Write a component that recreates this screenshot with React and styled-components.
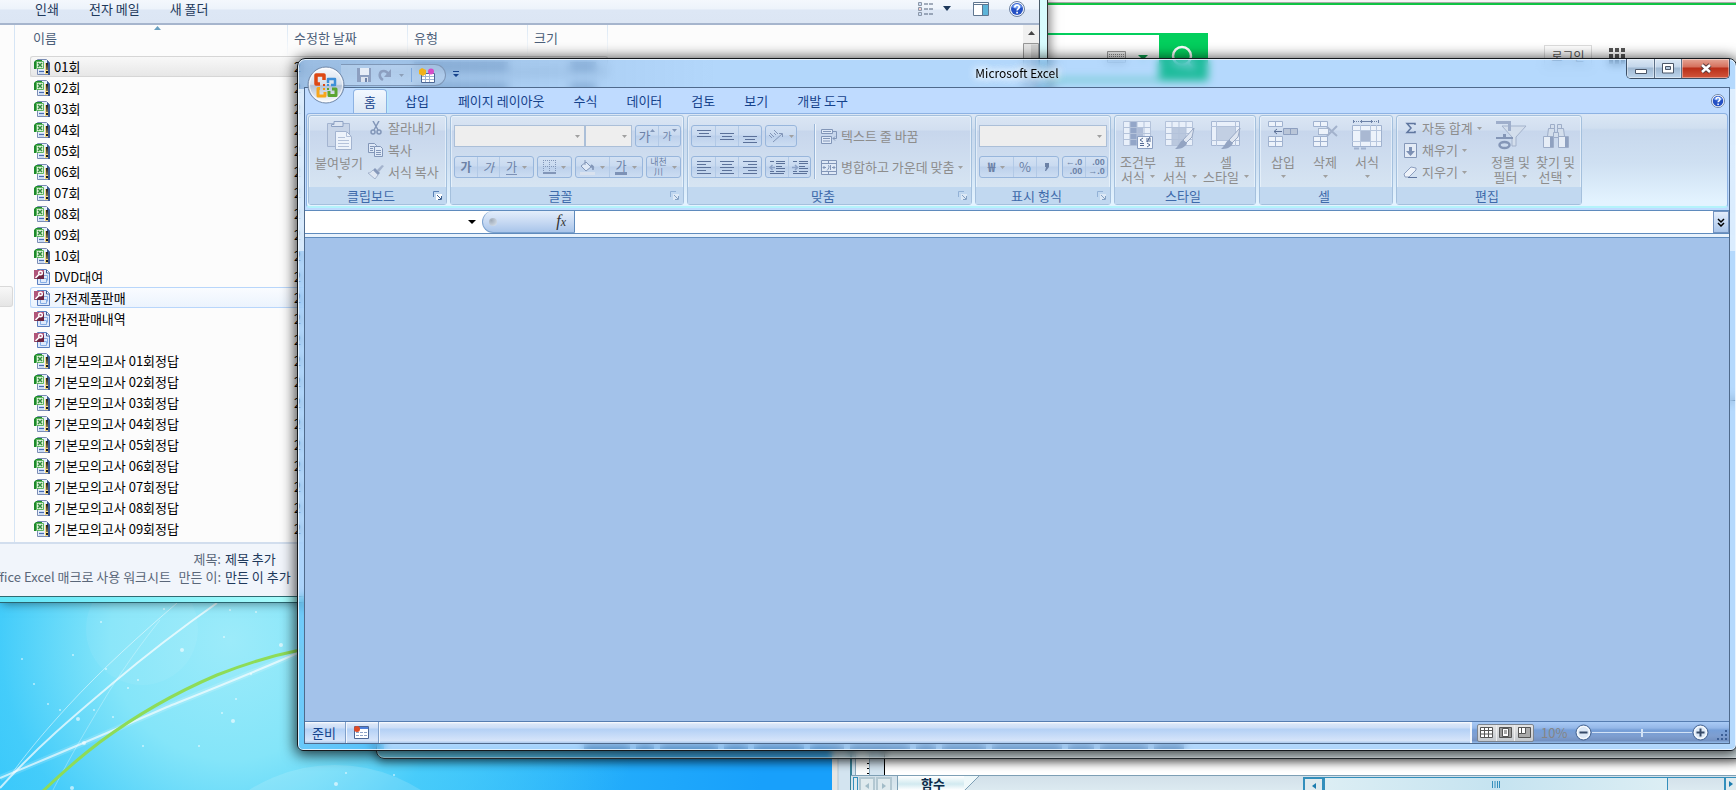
import React from 'react';
import styled, { createGlobalStyle, css } from 'styled-components';

const GlobalStyle = createGlobalStyle`
  * {
    box-sizing: border-box;
  }
  body {
    margin: 0;
    font-family: 'Noto Sans CJK KR', 'Open Sans', sans-serif;
    font-size: 13px;
    line-height: 18px;
    overflow: hidden;
  }
  button, input, select {
    font: inherit;
    color: inherit;
    margin: 0;
    padding: 0;
    border: 0;
    border-radius: 0;
    background: none;
    outline: none;
  }
  svg {
    display: block;
    flex: none;
  }
`;

/* ---------- desktop ---------- */

const Desktop = styled.div`
  position: relative;
  height: 100vh;
  overflow: hidden;
  background: radial-gradient(
      circle at 230px calc(100% - 150px),
      #9cebfa 0,
      #84e5f9 120px,
      rgba(78, 208, 250, 0.8) 230px,
      rgba(60, 200, 252, 0) 420px
    ),
    linear-gradient(100deg, #10bcfa 0, #35c2fb 25%, #18a0fb 48%);
`;
const Wallpaper = styled.svg`
  position: absolute;
  left: 0;
  bottom: 0;
`;

const sparks = [
  [164, 6, 1], [230, 7, 1], [256, 9, 1], [101, 19, 1], [182, 47, 2], [281, 42, 2],
  [224, 34, 1], [73, 52, 1], [22, 56, 1], [138, 77, 1], [48, 101, 1], [106, 66, 1],
  [84, 140, 2], [94, 107, 1], [113, 114, 1], [128, 85, 1], [251, 71, 1], [222, 110, 1],
  [233, 118, 2], [236, 96, 1], [78, 116, 2], [60, 107, 1], [34, 81, 1], [72, 185, 2],
  [143, 143, 1], [336, 181, 2], [394, 172, 1], [346, 170, 1], [199, 143, 1],
];

function Background() {
  return (
    <Wallpaper width="832" height="187" viewBox="0 0 832 187" fill="none">
      <circle cx="335" cy="322" r="160" fill="#fff" opacity="0.14" />
      <circle cx="142" cy="26" r="56" fill="#fff" opacity="0.06" />
      <path d="M177 0C140 32 103 65 67 104C48 125 32 143 13 169" stroke="#fff" opacity="0.5" />
      <path d="M160 17C140 42 124 65 110 87C92 117 72 150 53 187" stroke="#fff" opacity="0.3" />
      <path d="M217 0C180 26 145 53 113 80C75 112 38 143 0 185" stroke="#fff" strokeWidth="2" opacity="0.7" />
      <path d="M0 175C60 150 110 129 167 104C212 86 255 69 300 49" stroke="#fff" strokeWidth="6" opacity="0.15" />
      <path d="M0 175C60 150 110 129 167 104C212 86 255 69 300 49" stroke="#fff" strokeWidth="2" opacity="0.65" />
      <path d="M43 188C62 170 80 154 100 139C135 113 175 90 217 72C245 61 270 53 300 47" stroke="#8edc57" strokeWidth="3" />
      {sparks.map(([x, y, r]) => (
        <circle key={`${x}-${y}`} cx={x} cy={y} r={r} fill="#fff" opacity="0.6" />
      ))}
    </Wallpaper>
  );
}

/* ---------- web browser ---------- */

const Browser = styled.section`
  position: absolute;
  top: 0;
  left: 1048px;
  right: 0;
  height: 400px;
  background: #fff;
  border-top: 2px solid #f4f4f4;
`;
const BrowserLine = styled.div`
  height: 3px;
  background: #10c343;
  border-top: 1px solid #a8a8a8;
`;
const BrowserRow = styled.div`
  display: flex;
  align-items: flex-start;
  justify-content: space-between;
  padding: 28px 111px 0 0;
`;
const SearchBox = styled.div`
  display: flex;
`;
const SearchField = styled.div`
  display: flex;
  align-items: center;
  width: 111px;
  height: 48px;
  border: 2px solid #03cf5d;
  border-left: 0;
  border-right: 0;
  gap: 12px;
`;
const SearchInput = styled.input`
  flex: 1;
  min-width: 0;
`;
const SearchButton = styled.button`
  display: flex;
  flex: none;
  align-items: center;
  justify-content: center;
  width: 49px;
  height: 48px;
  background: #03cf5d;
`;
const BrowserLinks = styled.div`
  display: flex;
  gap: 17px;
  margin-top: 12px;
`;
const LoginLink = styled.a`
  width: 48px;
  height: 24px;
  border: 1px solid #ddd;
  color: #555;
  text-align: center;
  text-decoration: none;
  font-size: 12px;
  line-height: 20px;
`;

function BrowserWindow() {
  return (
    <Browser>
      <BrowserLine />
      <BrowserRow>
        <SearchBox>
          <SearchField>
            <SearchInput aria-label="검색" />
            <svg width="19" height="12" viewBox="0 0 19 12">
              <path d="M.5.500h18v11h-18z" fill="#eee" stroke="#999" />
              <path d="M2 3.500h15M2 5.500h15M2 7.500h15" stroke="#888" strokeDasharray="1 1" />
            </svg>
            <svg width="21" height="5" viewBox="0 0 21 5">
              <path d="M0 0h10l-5 5z" fill="#0a9a4a" />
            </svg>
          </SearchField>
          <SearchButton aria-label="검색 실행">
            <svg width="28" height="28" viewBox="0 0 28 28" fill="none" stroke="#fff" strokeWidth="2.500">
              <circle cx="12" cy="13" r="9" />
              <path d="M18 20l6 6" />
            </svg>
          </SearchButton>
        </SearchBox>
        <BrowserLinks>
          <LoginLink href="#">로그인</LoginLink>
          <svg width="16" height="20" viewBox="0 0 16 20" fill="#555">
            {[3, 9, 15].map((y) => [0, 6, 12].map((x) => <rect key={`${x}${y}`} x={x} y={y} width="4" height="4" />))}
          </svg>
        </BrowserLinks>
      </BrowserRow>
    </Browser>
  );
}

/* ---------- file explorer ---------- */

const Explorer = styled.section`
  position: absolute;
  top: 0;
  left: 0;
  bottom: 187px;
  width: 1048px;
  padding: 0 7px 5px 0;
  background: linear-gradient(90deg, #62e6f8, #a6fbfb 280px, #d8fcfd);
  border-right: 1px solid #333;
  border-bottom: 1px solid #2a6570;
  box-shadow: 2px 0 10px rgba(0, 0, 0, 0.5);
`;
const ExplorerBody = styled.div`
  display: flex;
  flex-direction: column;
  height: 100%;
  background: #fcfcfc;
  border-right: 1px solid #4a5a68;
  border-bottom: 1px solid #2f6c74;
`;
const CommandBar = styled.div`
  display: flex;
  align-items: center;
  flex: none;
  height: 25px;
  padding: 0 14px 6px 35px;
  gap: 30px;
  color: #1e395b;
  background: linear-gradient(#f4f8fd 0, #edf3fb 9px, #dde7f5 10px, #dce6f4 100%);
  border-bottom: 2px solid #a6b5cd;
`;
const CommandIcons = styled.div`
  display: flex;
  align-items: center;
  margin-left: auto;
  gap: 10px;
`;
const IconButton = styled.button`
  display: flex;
  margin-right: ${(p) => p.$space || 0}px;
`;
const ExplorerMain = styled.div`
  display: flex;
  flex: 1;
  min-height: 0;
`;
const NavPane = styled.div`
  flex: none;
  width: 15px;
  padding-top: 261px;
  border-right: 1px solid #d6e5f5;
`;
const NavItem = styled.div`
  width: 13px;
  height: 21px;
  border: 1px solid #d9d9d9;
  border-left: 0;
  border-radius: 0 3px 3px 0;
  background: linear-gradient(#f8f8f8, #e5e5e5);
`;
const FileList = styled.div`
  flex: 1;
  overflow: hidden;
  padding-left: 15px;
`;
const FileTable = styled.table`
  width: 577px;
  table-layout: fixed;
  border-collapse: separate;
  border-spacing: 0;
  color: #000;
`;
const ColumnHead = styled.th`
  width: ${(p) => p.$width}px;
  height: 31px;
  padding: 0 0 9px ${(p) => (p.$first ? 3 : 6)}px;
  text-align: left;
  font-weight: normal;
  vertical-align: bottom;
  color: #4c607a;
  border-right: 1px solid;
  border-image: linear-gradient(#d8e6f4, #fcfcfc) 1;
`;
const SortMark = styled.svg`
  margin: 0 0 -1px 121px;
`;
const FileRow = styled.tr`
  height: 21px;
  ${(p) =>
    p.$state === 'selected' &&
    css`
      background: linear-gradient(#f9f9f9, #e6e6e6);
      box-shadow: inset 0 0 0 1px #d6d6d6;
      border-radius: 3px;
    `}
  ${(p) =>
    p.$state === 'hover' &&
    css`
      background: linear-gradient(#fafcff, #ebf3fd);
      box-shadow: inset 0 0 0 1px #b8d6fb;
      border-radius: 3px;
    `}
`;
const FileCell = styled.td`
  height: 21px;
  padding: 0 0 0 6px;
  white-space: nowrap;
  line-height: 19px;
`;
const FileName = styled.div`
  display: flex;
  align-items: center;
  gap: 4px;
  margin-left: -2px;
`;
const Smudge = styled.div`
  width: ${(p) => p.$width}px;
  height: 9px;
  margin-left: ${(p) => p.$left || 0}px;
  background: #b4b9c2;
`;
const DetailsPane = styled.div`
  display: grid;
  grid-template-columns: 171px 46px auto;
  flex: none;
  align-content: start;
  column-gap: 4px;
  height: 54px;
  padding-top: 6px;
  background: #f1f5fb;
  border-top: 2px solid #d2deee;
  color: #5a6779;
  white-space: nowrap;
  strong {
    font-weight: normal;
    color: #1e395b;
  }
`;
const DetailCell = styled.span`
  display: flex;
  justify-content: flex-end;
  overflow: hidden;
`;

function ExcelFileIcon() {
  return (
    <svg width="16" height="16" viewBox="0 0 16 16">
      <path d="M3.500.500h9l3 3v12h-12z" fill="#e9f0fb" stroke="#7a8cb4" />
      <path d="M13 1l3 3v12h-2V5h-1z" fill="#3c5a94" />
      <path d="M5 11h5v4H5z" fill="#c9daf2" />
      <path d="M5 12.500h5" stroke="#4a6cb0" />
      <path d="M0 3l2-2h6v2H2v7H0z" fill="#1d8a2b" />
      <path d="M2.500 2.500h7v7h-7z" fill="#e2f4dd" stroke="#5db45f" />
      <path d="M4 4l4 4M8 4l-4 4" stroke="#2f8a3b" strokeWidth="1.500" />
      <path d="M11 4h3v11h-3z" fill="#f6d77d" />
      <path d="M12 4h2l-.5 7h-1zM12 12h2v2h-2z" fill="#1c1c1c" />
    </svg>
  );
}

function AccessFileIcon() {
  return (
    <svg width="16" height="16" viewBox="0 0 16 16">
      <path d="M3.500.500h9l3 3v12h-12z" fill="#dfeafb" stroke="#5b7fc0" />
      <path d="M12.500 1v3h3" stroke="#3c5a94" fill="#fff" />
      <path d="M6.500 9.500h6v4h-6zM8.500 6.500h5v5" fill="none" stroke="#86aee6" />
      <path d="M0 1h10v5L0 10z" fill="#b0567a" />
      <path d="M0 10l10-7v7z" fill="#6c2440" />
      <circle cx="6.500" cy="4" r="1.800" fill="none" stroke="#fff" strokeWidth="1.400" />
      <path d="M5 5.500L1.500 9" stroke="#fff" strokeWidth="1.600" />
    </svg>
  );
}

function HelpIcon({ size = 16 }) {
  return (
    <svg width={size} height={size} viewBox="0 0 16 16">
      <circle cx="8" cy="8" r="7.500" fill="#f4f8ff" stroke="#6a7f9f" />
      <circle cx="8" cy="8" r="6" fill="#2450c4" />
      <path d="M3 6a5.500 5.500 0 0 1 10 0c-3 2-7 2-10 0z" fill="#6f9bf0" />
      <path d="M5.800 6.400c0-3 4.500-3 4.500-.3 0 1.700-2.200 1.700-2.200 3.400M8.100 10.800v1.700" fill="none" stroke="#fff" strokeWidth="1.700" />
    </svg>
  );
}

const books = ['01', '02', '03', '04', '05', '06', '07', '08', '09', '10'];
const files = [
  ...books.map((n) => ({ name: `${n}회` })),
  { name: 'DVD대여', access: true },
  { name: '가전제품판매', access: true },
  { name: '가전판매내역', access: true },
  { name: '급여', access: true },
  ...books.map((n) => ({ name: `기본모의고사 ${n}회정답` })),
];
const rowState = { 0: 'selected', 11: 'hover' };

function ExplorerWindow() {
  return (
    <Explorer>
      <ExplorerBody>
        <CommandBar>
          <button>인쇄</button>
          <button>전자 메일</button>
          <button>새 폴더</button>
          <CommandIcons>
            <IconButton aria-label="보기">
              <svg width="16" height="14" viewBox="0 0 16 14" fill="none">
                <path d="M1.500.500h3v3h-3zM1.500 5.500h3v3h-3zM1.500 10.500h3v3h-3z" fill="#fff" stroke="#8b97a8" />
                <path d="M7 2h4M12 2h4M7 7h4M12 7h4M7 12h4M12 12h4" stroke="#52627a" />
                <path d="M2.500 2h1M2.500 12h1" stroke="#2d6fd0" />
                <path d="M2.500 7h1" stroke="#d03a2d" />
              </svg>
            </IconButton>
            <IconButton aria-label="보기 선택" $space={12}>
              <svg width="8" height="5" viewBox="0 0 8 5">
                <path d="M0 0h8L4 5z" fill="#1e395b" />
              </svg>
            </IconButton>
            <IconButton aria-label="미리 보기 창" $space={10}>
              <svg width="16" height="14" viewBox="0 0 16 14">
                <path d="M.5.500h15v13H.500z" fill="#fff" stroke="#5f7690" />
                <path d="M10 3h5v10h-5z" fill="#5db4d8" />
                <path d="M0 2.500h16M9.500 2v12" stroke="#5f7690" />
              </svg>
            </IconButton>
            <IconButton aria-label="도움말">
              <HelpIcon />
            </IconButton>
          </CommandIcons>
        </CommandBar>
        <ExplorerMain>
          <NavPane>
            <NavItem />
          </NavPane>
          <FileList>
            <FileTable>
              <thead>
                <tr>
                  <ColumnHead $width={258} $first>
                    <SortMark width="7" height="4" viewBox="0 0 7 4">
                      <path d="M0 4l3.500-4L7 4z" fill="#6aa0c0" />
                    </SortMark>
                    이름
                  </ColumnHead>
                  <ColumnHead $width={120}>수정한 날짜</ColumnHead>
                  <ColumnHead $width={120}>유형</ColumnHead>
                  <ColumnHead $width={80}>크기</ColumnHead>
                </tr>
              </thead>
              <tbody>
                {files.map((file, i) => (
                  <FileRow key={file.name} $state={rowState[i]}>
                    <FileCell>
                      <FileName>
                        {file.access ? <AccessFileIcon /> : <ExcelFileIcon />}
                        {file.name}
                      </FileName>
                    </FileCell>
                    <FileCell>2</FileCell>
                    <FileCell>
                      <Smudge $width={94} />
                    </FileCell>
                    <FileCell>
                      <Smudge $width={26} $left={36} />
                    </FileCell>
                  </FileRow>
                ))}
              </tbody>
            </FileTable>
          </FileList>
          <svg width="16" height="400" viewBox="0 0 16 400">
            <path d="M0 0h16v400H0z" fill="#f0f0f0" />
            <path d="M5 10l3.500-4 3.500 4z" fill="#444" />
            <path d="M.5 18.500h15V400H.5z" fill="#e6e6e6" stroke="#979797" />
            <path d="M8 19.500h7V400H8z" fill="#cfcfcf" />
          </svg>
        </ExplorerMain>
        <DetailsPane>
          <span />
          <DetailCell>제목:</DetailCell>
          <strong>제목 추가</strong>
          <DetailCell>Microsoft Office Excel 매크로 사용 워크시트</DetailCell>
          <DetailCell>만든 이:</DetailCell>
          <strong>만든 이 추가</strong>
        </DetailsPane>
      </ExplorerBody>
    </Explorer>
  );
}

/* ---------- spreadsheet behind, lower right ---------- */

const Sheet = styled.section`
  position: absolute;
  left: 832px;
  right: 0;
  bottom: 0;
  height: 100px;
  display: flex;
  flex-direction: column;
  padding-left: 19px;
  background: linear-gradient(90deg, #e6e6e4 0 5px, #b4c6d2 6px, #d3e4f0 7px 18px, #3a8298 18px 20px);
`;
const SheetArea = styled.div`
  display: flex;
  flex: 1;
  background: #fff;
`;
const Ruler = styled.div`
  display: flex;
  align-items: flex-end;
  justify-content: center;
  width: 34px;
  border-left: 1px solid #3a8298;
  border-right: 1px solid #000;
  background: linear-gradient(90deg, #d3e4f0 0 3px, #8aa9bd 3px 4px, #fbfcfc 4px 17px, #8aa9bd 17px 18px, #d3e4f0 18px);
`;
const SheetTabs = styled.div`
  display: flex;
  height: 15px;
  overflow: hidden;
  background: linear-gradient(#d2e0e9, #dceaf0);
  border-top: 1px solid #7d9fb5;
`;
const SheetNav = styled.div`
  display: flex;
  flex: none;
  gap: 1px;
  width: 47px;
  padding: 1px 3px 0 2px;
  border-right: 1px solid #7d9fb5;
`;
const SheetNavButton = styled.button`
  display: flex;
  justify-content: center;
  width: ${(p) => p.$width || 16}px;
  height: 16px;
  padding-top: 4px;
  border: ${(p) => (p.$strong ? '1px solid #338fbc' : '2px solid #b3c8d2')};
  background: #dfeaee;
`;
const SheetTab = styled.button`
  flex: none;
  width: 66px;
  padding-left: 4px;
  background: linear-gradient(#fff, #d2eaf0 8px, #fff);
  font-weight: bold;
  color: #0a2a48;
  line-height: 15px;
`;
const SheetScroll = styled.div`
  display: flex;
  width: 433px;
  height: 14px;
  margin: 1px 0 0 auto;
  border: solid #338fbc;
  border-width: 1px 0 0 1px;
`;
const SheetThumb = styled.div`
  display: flex;
  align-items: center;
  justify-content: center;
  width: 345px;
  border: solid #338fbc;
  border-width: 0 1px 0 2px;
  background: linear-gradient(90deg, #dceef4, #c5e3f0, #dceef4);
`;
const SheetEnd = styled(SheetNavButton)`
  margin-left: auto;
  border: 0;
  border-left: 2px solid #338fbc;
  padding-top: 3px;
`;

function SheetWindow() {
  return (
    <Sheet>
      <SheetArea>
        <Ruler>
          <svg width="2" height="12" viewBox="0 0 2 12">
            <path d="M1 0v12" stroke="#000" strokeWidth="2" strokeDasharray="1 4" />
          </svg>
        </Ruler>
      </SheetArea>
      <SheetTabs>
        <SheetNav>
          <SheetNavButton $width={5} $strong aria-label="탭 크기" />
          <SheetNavButton aria-label="이전 시트">
            <svg width="4" height="6" viewBox="0 0 4 6"><path d="M4 0v6L0 3z" fill="#a2bcc8" /></svg>
          </SheetNavButton>
          <SheetNavButton aria-label="다음 시트">
            <svg width="4" height="6" viewBox="0 0 4 6"><path d="M0 0v6l4-3z" fill="#a2bcc8" /></svg>
          </SheetNavButton>
        </SheetNav>
        <SheetTab>함수</SheetTab>
        <svg width="15" height="15" viewBox="0 0 15 15">
          <path d="M0 0h15L0 15z" fill="#eef8fa" />
          <path d="M0 15L15 0" stroke="#7d9fb5" />
        </svg>
        <SheetScroll>
          <SheetNavButton $width={19} $strong aria-label="왼쪽으로">
            <svg width="4" height="6" viewBox="0 0 4 6"><path d="M4 0v6L0 3z" fill="#1c7cae" /></svg>
          </SheetNavButton>
          <SheetThumb>
            <svg width="8" height="7" viewBox="0 0 8 7">
              <path d="M.5 0v7M3 0v7M5.500 0v7M7.500 0v7" stroke="#338fbc" />
            </svg>
          </SheetThumb>
          <SheetEnd $width={12} aria-label="오른쪽으로">
            <svg width="4" height="6" viewBox="0 0 4 6"><path d="M0 0v6l4-3z" fill="#1c7cae" /></svg>
          </SheetEnd>
        </SheetScroll>
      </SheetTabs>
    </Sheet>
  );
}

/* ---------- document window directly behind excel ---------- */

const BackWindow = styled.section`
  position: absolute;
  top: 400px;
  left: 376px;
  right: -8px;
  bottom: 31px;
  padding: 0 7px 9px;
  border: 1px solid #2b3438;
  border-radius: 0 0 8px 8px;
  background: rgba(150, 195, 205, 0.3);
  box-shadow: 0 3px 10px rgba(0, 0, 0, 0.55), inset 0 0 0 1px rgba(255, 255, 255, 0.5);
  backdrop-filter: blur(3px);
`;
const BackPage = styled.div`
  display: flex;
  align-items: flex-end;
  gap: 6px;
  height: 100%;
  padding-left: 200px;
  background: #fff;
`;
const BackWord = styled.span`
  width: ${(p) => p.$width}px;
  height: 5px;
  background: #6c7a90;
`;

/* ---------- excel window ---------- */

const ExcelWindow = styled.section`
  position: absolute;
  top: 58px;
  left: 297px;
  right: -1px;
  bottom: 39px;
  display: flex;
  flex-direction: column;
  padding: 0 6px 6px;
  border: 1px solid #14181c;
  border-radius: 8px 8px 6px 6px;
  background: linear-gradient(rgba(255, 255, 255, 0.55), rgba(255, 255, 255, 0.5)) 0 30px / 6px 162px no-repeat,
    linear-gradient(rgba(255, 255, 255, 0.55), rgba(255, 255, 255, 0.5)) 100% 30px / 6px 162px no-repeat,
    linear-gradient(90deg, rgba(110, 140, 180, 0.3) 0, rgba(110, 140, 180, 0.12) 240px, rgba(110, 140, 180, 0) 420px)
      0 0 / 100% 30px no-repeat,
    rgba(70, 160, 250, 0.4);
  box-shadow: 0 2px 14px 2px rgba(0, 0, 0, 0.75), inset 0 0 0 1px rgba(240, 248, 255, 0.85);
  backdrop-filter: blur(4px);
`;
const TitleBar = styled.header`
  display: grid;
  grid-template-columns: 1fr auto 1fr;
  flex: none;
  align-items: start;
  height: 28px;
`;
const TitleLeft = styled.div`
  display: flex;
  padding-left: 37px;
`;
const TitleRight = styled.div`
  display: flex;
  justify-content: flex-end;
`;
const QuickAccess = styled.div`
  display: flex;
  align-items: center;
  gap: 7px;
  height: 22px;
  margin-top: 5px;
  padding: 0 9px 0 16px;
  border: 1px solid #7f98b8;
  border-left: 0;
  border-radius: 0 11px 11px 0;
  background: rgba(235, 245, 255, 0.25);
`;
const QuickDivider = styled.span`
  width: 1px;
  height: 14px;
  background: #7fa8dc;
`;
const MoreButton = styled.button`
  display: flex;
  height: 7px;
  margin: 12px 0 0 7px;
`;
const Title = styled.h1`
  margin: 5px 0 0;
  font-size: 12px;
  line-height: 18px;
  font-weight: normal;
  color: #000;
  text-shadow: 0 0 6px #fff, 0 0 10px #fff, 0 0 10px #fff;
`;
const WindowButtons = styled.div`
  display: flex;
  height: 20px;
  border: 1px solid #3c4f66;
  border-top: 0;
  border-radius: 0 0 5px 5px;
  overflow: hidden;
`;
const WindowButton = styled.button`
  display: flex;
  align-items: center;
  justify-content: center;
  width: ${(p) => p.$width}px;
  border-right: ${(p) => (p.$close ? 0 : '1px solid #5c7088')};
  background: ${(p) =>
    p.$close
      ? 'linear-gradient(#e5a595 0, #d5705c 8px, #b92e18 9px, #d2563c 100%)'
      : 'linear-gradient(#dbe8f5 0, #c3d6ea 8px, #9fb8d2 9px, #bdd5ec 100%)'};
  box-shadow: inset 0 0 0 1px rgba(255, 255, 255, 0.4);
`;
const Client = styled.div`
  display: flex;
  flex: 1;
  flex-direction: column;
  min-height: 0;
  border: 1px solid #4f6a8c;
  background: #bfdbff;
`;
const OrbButton = styled.button`
  position: absolute;
  top: 7px;
  left: 9px;
`;
const TabBar = styled.nav`
  display: flex;
  flex: none;
  align-items: flex-end;
  gap: 7px;
  height: 25px;
  padding: 0 4px 0 48px;
`;
const Tab = styled.button`
  height: 24px;
  padding: 0 11px;
  line-height: 22px;
  color: #15428b;
  white-space: nowrap;
  ${(p) =>
    p.$active &&
    css`
      margin-bottom: -1px;
      height: 25px;
      padding: 0 10px;
      border: 1px solid #8db2e3;
      border-bottom: 0;
      border-radius: 4px 4px 0 0;
      background: linear-gradient(#f2f8ff, #e3edf8 60%, #dbe7f5);
      box-shadow: 1px 0 2px #b5f0fa;
    `}
`;
const TabHelp = styled.button`
  margin: 0 0 5px auto;
`;
const Ribbon = styled.div`
  display: flex;
  flex: none;
  gap: 3px;
  height: 95px;
  margin: 0 1px;
  padding: 1px;
  border: 1px solid #8db2e3;
  border-bottom: 2px solid #b4f3fb;
  border-radius: 4px;
  background: linear-gradient(#dbe7f5 0, #d0dff0 14px, #c7d8ed 16px, #cfe0f2 50px, #e3f3ff 88px);
`;
const Group = styled.section`
  display: flex;
  flex-direction: column;
  flex: none;
  width: ${(p) => p.$width}px;
  height: 90px;
  border: 1px solid #a4c0dd;
  border-radius: 3px;
  background: linear-gradient(#dae6f4 0, #d2dff0 14px, #c7d6ec 15px, #d6e4f2 70px);
  box-shadow: inset 0 0 0 1px rgba(240, 248, 255, 0.6);
`;
const GroupBody = styled.div`
  display: flex;
  height: 71px;
  padding: ${(p) => p.$pad || '1px 3px 0'};
`;
const GroupLabel = styled.div`
  display: flex;
  align-items: center;
  height: 17px;
  padding-right: 4px;
  background: #c1d8f0;
  color: #3e6aaa;
  span {
    flex: 1;
    text-align: center;
  }
`;
const Launcher = styled.button`
  opacity: ${(p) => (p.disabled ? 0.45 : 1)};
`;
const Column = styled.div`
  display: flex;
  flex-direction: column;
  align-items: flex-start;
  min-width: ${(p) => p.$min || 0}px;
`;
const ToolColumn = styled(Column)`
  gap: 9px;
`;
const BigButton = styled.button`
  display: flex;
  flex-direction: column;
  align-items: center;
  min-width: ${(p) => p.$min || 42}px;
  padding: 3px 0 0;
  color: #8d8d8d;
  line-height: 15px;
  white-space: nowrap;
  svg + span {
    margin-top: 4px;
  }
  span + svg {
    margin-top: 6px;
  }
`;
const BigLine = styled.span`
  display: flex;
  align-items: center;
  justify-content: center;
  gap: 5px;
  height: 15px;
  && svg {
    margin: 0;
  }
`;
const SmallButton = styled.button`
  display: flex;
  align-items: center;
  gap: 4px;
  height: 22px;
  color: #8d8d8d;
  white-space: nowrap;
  padding: 0 2px;
`;
const IconSlot = styled.span`
  display: flex;
  justify-content: center;
  width: 16px;
`;
const ToolRow = styled.div`
  display: flex;
  gap: 3px;
`;
const ToolSet = styled.div`
  display: flex;
  height: 22px;
  border: 1px solid #98b6dc;
  border-radius: 3px;
  background: linear-gradient(#d3e1f3 0, #c9daf0 9px, #bcd0eb 10px, #ccddf2 100%);
`;
const Tool = styled.button`
  display: flex;
  align-items: center;
  justify-content: center;
  gap: 5px;
  width: ${(p) => p.$width || 22}px;
  color: #6b81a6;
  & + & {
    border-left: 1px solid #b2c9e6;
  }
`;
const SizeMark = styled.svg`
  align-self: flex-start;
  margin: 3px 0 0 -5px;
`;
const ToolDivider = styled.span`
  width: 2px;
  height: 55px;
  margin: -1px 3px 0 3px;
  border-left: 1px solid #9ab6d8;
  border-right: 1px solid #eef5fc;
`;
const Combo = styled.label`
  display: flex;
  align-items: center;
  width: ${(p) => p.$width}px;
  height: 22px;
  padding-right: 4px;
  border: 1px solid #abbfd8;
  background: #eee;
  & + & {
    margin-left: -3px;
  }
  select {
    flex: 1;
    min-width: 0;
    appearance: none;
  }
`;
const FormulaBar = styled.div`
  display: flex;
  flex: none;
  height: 28px;
  margin-top: 2px;
  border-top: 1px solid #5f8bbd;
  background: #fff;
  box-shadow: inset 0 -1px 0 #5f8bbd, inset 0 -4px 0 #e8f2fc, inset 0 -5px 0 #5f8bbd;
`;
const NameBox = styled.input`
  width: 163px;
  height: 22px;
  padding: 0 4px;
`;
const NameArrow = styled.button`
  display: flex;
  align-items: center;
  width: 14px;
  height: 22px;
`;
const FxPill = styled.div`
  display: flex;
  align-items: center;
  justify-content: space-between;
  width: 93px;
  height: 22px;
  padding: 0 8px 0 6px;
  border: 1px solid #7da3d0;
  border-top: 0;
  border-right-color: #5f8bbd;
  border-radius: 11px 0 0 11px;
  background: linear-gradient(#e4eefb, #c8daf3 50%, #a9c5ea);
`;
const FxDot = styled.span`
  width: 8px;
  height: 8px;
  border-radius: 50%;
  background: radial-gradient(circle at 30% 30%, #a0abb8, #dce6f2);
`;
const FxButton = styled.button`
  font-family: 'Liberation Serif', serif;
  font-size: 16px;
  font-style: italic;
  line-height: 18px;
  color: #333;
  small {
    font-size: 12px;
  }
`;
const FormulaInput = styled.input`
  flex: 1;
  height: 22px;
  padding: 0 4px;
`;
const ExpandButton = styled.button`
  display: flex;
  align-items: center;
  justify-content: center;
  width: 16px;
  height: 22px;
  border: 1px solid #7393c0;
  background: linear-gradient(#e4eefb, #a9c5ea);
`;
const Workspace = styled.main`
  flex: 1;
  background: #a3c2ea;
`;
const StatusBar = styled.footer`
  display: flex;
  flex: none;
  height: 22px;
  border-top: 1px solid #567db1;
  background: linear-gradient(#fff 0, #d9e6f8 2px, #cbddf7 6px, #b3d0f5 7px, #d7e5fa 19px, #b4cff0 20px);
`;
const StatusCell = styled.div`
  display: flex;
  align-items: center;
  padding: 0 9px 0 ${(p) => p.$left}px;
  color: #15428b;
  border-right: 1px solid #7f9fc9;
  box-shadow: 1px 0 0 #f2f7fe;
`;
const StatusRight = styled.div`
  display: flex;
  align-items: center;
  width: 259px;
  margin-left: auto;
  padding-left: 5px;
  border-left: 2px solid #f0f6fe;
  background: linear-gradient(#a9cbf6 0, #94b7e8 6px, #769fd8 8px, #7e9ed0 14px, #7290c0 19px, #8db4e4 20px);
`;
const ViewButtons = styled.div`
  display: flex;
  width: 57px;
  height: 18px;
  border: 1px solid #7c848e;
  border-radius: 2px;
  background: linear-gradient(#e4e4e4, #c5c9ce);
`;
const ViewButton = styled.button`
  display: flex;
  flex: 1;
  align-items: center;
  justify-content: center;
  & + & {
    border-left: 1px solid #eee;
  }
`;
const ZoomLabel = styled.span`
  width: 41px;
  padding-left: 7px;
  color: #858585;
`;
const ZoomButton = styled.button`
  display: flex;
`;
const ZoomSlider = styled.input`
  flex: 1;
  min-width: 0;
  height: 10px;
  appearance: none;
  background: linear-gradient(#d2e2f6, #d2e2f6) center / 100% 1px no-repeat;
  &::-webkit-slider-thumb {
    appearance: none;
    width: 2px;
    height: 8px;
    background: #d2e2f6;
  }
`;
const Grip = styled.svg`
  margin: 5px 1px 0 8px;
`;

const Caret = ({ color = '#a0a0a0', w = 5, h = 3 }) => (
  <svg width={w} height={h} viewBox="0 0 6 3" preserveAspectRatio="none">
    <path d="M0 0h6L3 3z" fill={color} />
  </svg>
);

const ink = '#8296b8';
const pale = '#dfe9f7';

const icons = {
  paste: (
    <svg width="27" height="31" viewBox="0 0 27 31">
      <path d="M1.500 3.500h22v23h-22z" fill="#c8d5e8" stroke="#a3b4d0" />
      <path d="M8 1.500h9v5H5.500V4.500H8z" fill="#dce5f2" stroke="#8ea2c4" />
      <path d="M9.500 11.500h11l5 5v13h-16z" fill="#edf3fb" stroke="#a3b4d0" />
      <path d="M20.500 11.500v5h5M12 17.500h7M12 20.500h11M12 23.500h11M12 26.500h11" fill="none" stroke="#b4c2da" />
    </svg>
  ),
  cut: (
    <svg width="16" height="14" viewBox="0 0 16 14" fill="none" stroke={ink}>
      <path d="M5 0l5 9M11 0L6 9" strokeWidth="1.500" />
      <circle cx="5" cy="11" r="2" strokeWidth="1.500" />
      <circle cx="11" cy="11" r="2" strokeWidth="1.500" />
    </svg>
  ),
  copy: (
    <svg width="16" height="14" viewBox="0 0 16 14" stroke={ink} fill={pale}>
      <path d="M.5.500h6l2 2v7h-8z" />
      <path d="M2 3.500h4M2 5.500h3M2 7.500h3" />
      <path d="M6.500 3.500h6l2 2v8h-8z" />
      <path d="M8 7.500h5M8 9.500h5M8 11.500h5" />
    </svg>
  ),
  brush: (
    <svg width="16" height="14" viewBox="0 0 16 14">
      <path d="M14 0l2 1-5 6-2-2z" fill="#a4b3cd" />
      <path d="M7 3l5 5-2 2-5-5z" fill="#8698ba" />
      <path d="M5 5l5 5-3 4-7-6c2 0 3-1 5-3z" fill="#dfe7f3" stroke="#a4b3cd" />
    </svg>
  ),
  border: (
    <svg width="13" height="14" viewBox="0 0 13 14" stroke={ink}>
      <path d="M0 .5h13M0 6.500h13M.5 0v12M6.500 0v12M12.500 0v12" strokeDasharray="1 1" />
      <path d="M0 13h13" strokeWidth="2" />
    </svg>
  ),
  fill: (
    <svg width="15" height="15" viewBox="0 0 15 15">
      <path d="M1 6l5-4 5 5-5 4z" fill={pale} stroke={ink} />
      <path d="M5 0v5M11 5c3 0 3 3 2 5-1-2 0-3-2-3z" stroke={ink} fill={ink} />
      <path d="M0 12h15v3H0z" fill="#d9e2ef" />
    </svg>
  ),
  orient: (
    <svg width="16" height="14" viewBox="0 0 16 14" fill="none" stroke={ink}>
      <path d="M5 13l9-8M11 4.500h3.500V8M1 6l3 3M2 4l4 4M6 4l2 2M6 1l4 4" />
    </svg>
  ),
  wrap: (
    <svg width="16" height="15" viewBox="0 0 16 15" fill={pale} stroke={ink}>
      <path d="M.5.500h11v4H.500zM.5 7.500h10v7H.500zM2 2.500h8M2 9.500h7M2 12h7" />
      <path d="M12 2.500h3.500v7H12M14 7.500l-2 2 2 2" fill="none" />
    </svg>
  ),
  merge: (
    <svg width="16" height="15" viewBox="0 0 16 15" fill={pale} stroke={ink}>
      <path d="M.5.500h15v14H.500zM0 3.500h16M0 11.500h16M7.500 0v3M7.500 12v3" />
      <path d="M2 7.500h3M3.500 6L2 7.500 3.500 9M14 7.500h-3M12.500 6L14 7.500 12.500 9M7 5.500c2 0 1 3-1 5M9.500 5v5" fill="none" />
    </svg>
  ),
  conditional: (
    <svg width="32" height="30" viewBox="0 0 32 30">
      <path d="M1.500 1.500h27v24h-27z" fill="#e9f0fa" />
      <path d="M8 1h7v25H8z" fill="#93a6c8" />
      <path d="M15 8h6v12h-6z" fill="#aebdd8" />
      <path d="M1.500 1.500h27v24h-27zM1 7.500h27M1 13.500h27M1 19.500h27M8 1v25M15 1v25M22 1v25" fill="none" stroke="#b3c2da" />
      <path d="M15.500 16.500h15v12h-15z" fill="#f3f7fc" stroke="#8b9fc2" />
      <path d="M21 18l-3 2 3 2M18 23.500h4M18 25.500h4M24 19h5M24 21h5M28 17l-3 5M25 23l3 2-3 2" fill="none" stroke="#546a94" />
    </svg>
  ),
  table: (
    <svg width="32" height="30" viewBox="0 0 32 30">
      <path d="M1.500 1.500h27v24h-27z" fill="#e9f0fa" />
      <path d="M8 8h14v18H8z" fill="#bac8de" />
      <path d="M1.500 1.500h27v24h-27zM1 7.500h27M1 13.500h27M1 19.500h27M8 1v25M15 1v25M22 1v25" fill="none" stroke="#b3c2da" />
      <path d="M30 8l-2 9-6 6-3-3z" fill="#dfe6f1" stroke="#98a8c4" />
      <path d="M19 20l4 3c-2 5-7 6-12 6 4-3 4-7 8-9z" fill="#93a4c2" />
    </svg>
  ),
  cellStyle: (
    <svg width="32" height="30" viewBox="0 0 32 30">
      <path d="M1.500 1.500h28v24h-28z" fill="#e9f0fa" stroke="#a5b6d2" />
      <path d="M6 6h19v14H6z" fill="#c2cfe3" />
      <path d="M6.500 1v25M25.500 1v25M1 6.500h28M1 20.500h28" stroke="#b3c2da" />
      <path d="M30 8l-2 9-6 6-3-3z" fill="#dfe6f1" stroke="#98a8c4" />
      <path d="M19 20l4 3c-2 5-7 6-12 6 4-3 4-7 8-9z" fill="#93a4c2" />
    </svg>
  ),
  insert: (
    <svg width="32" height="30" viewBox="0 0 32 30" fill="#edf3fb" stroke="#a0b2cf">
      <path d="M1.500 1.500h14v5h-14zM8.500 1v5M1.500 16.500h14v10h-14zM8.500 16v10M1 21.500h14" />
      <path d="M16.500 8.500h14v6h-14zM23.500 8v6" fill="#b9c5d8" stroke="#8d9fbf" />
      <path d="M7 11.500h8M10 9l-3 2.500L10 14" fill="none" stroke="#5c7096" />
    </svg>
  ),
  remove: (
    <svg width="32" height="30" viewBox="0 0 32 30" fill="#edf3fb" stroke="#a0b2cf">
      <path d="M4.500 1.500h14v5h-14zM11.500 1v5M4.500 16.500h14v10h-14zM11.500 16v10M4 21.500h14" />
      <path d="M9.500 8.500h10v6h-10z" stroke="#7186ab" strokeDasharray="1 1" />
      <path d="M18 7l10 9M28 6L18 16" fill="none" stroke="#a3b2cc" strokeWidth="2" />
    </svg>
  ),
  format: (
    <svg width="32" height="30" viewBox="0 0 32 30">
      <path d="M2.500 0v3M27.500 0v3M10.500 0v3M20.500 0v3" stroke="#6e83a8" />
      <path d="M3 1.500h8M21 1.500h7" stroke="#6e83a8" strokeDasharray="1 1" />
      <path d="M11 1.500h9" stroke="#6e83a8" />
      <path d="M1.500 5.500h29v21h-29z" fill="#edf3fb" stroke="#a0b2cf" />
      <path d="M10 10h9v11h-9z" fill="#a9b8d2" />
      <path d="M1 10.500h29M1 21.500h29M9.500 5v21M19.500 5v21M25.500 5v21" stroke="#b8c7de" />
      <path d="M3 28.500h5M10 28.500h5" stroke="#a0b2cf" strokeWidth="2" />
    </svg>
  ),
  sort: (
    <svg width="32" height="30" viewBox="0 0 32 30">
      <path d="M7 6h24l-10 11v9h-4V17z" fill="#d3deec" stroke="#a3b2cb" />
      <path d="M1 1h15v10h-3V4H1z" fill="#9eaecb" />
      <path d="M8 14h3v3h7v2H1v-2h7z" fill="#8496b7" />
      <ellipse cx="9.500" cy="25" rx="5" ry="3" fill="none" stroke="#8496b7" strokeWidth="2.500" />
    </svg>
  ),
  find: (
    <svg width="32" height="30" viewBox="0 0 32 30" fill="#d3deec" stroke="#9dadc8">
      <path d="M10.500 4.500h4v4h-4zM17.500 4.500h4v4h-4zM8.500 8.500h6v8h-7zM17.500 8.500h6l1 8h-7z" />
      <path d="M3.500 16.500h10v11h-10zM18.500 16.500h10v11h-10z" fill="#e6edf6" />
      <path d="M10 17h3v10h-3zM25 17h3v10h-3z" fill="#8fa1c0" stroke="none" />
      <path d="M13.500 12.500h5v5h-5z" />
    </svg>
  ),
  sum: (
    <svg width="13" height="14" viewBox="0 0 13 14">
      <path d="M11 4V2.500H3l4 4.500-4 4.500h8V10" fill="none" stroke="#5f769f" strokeWidth="1.500" />
    </svg>
  ),
  down: (
    <svg width="13" height="15" viewBox="0 0 13 15">
      <path d="M.5.500h12v14H.500z" fill="#e3ebf6" stroke="#8497b8" />
      <path d="M5 4h3v4h3l-4.500 5L2 8h3z" fill="#7c90b4" />
    </svg>
  ),
  eraser: (
    <svg width="14" height="12" viewBox="0 0 14 12">
      <path d="M1 8l7-7 5 1v2L6 11H2z" fill="#edf2f9" stroke="#8d9fbf" />
      <path d="M5 11.500h9" stroke="#5f769f" />
    </svg>
  ),
};

const threeLines = [[0, 14], [2, 10], [0, 14]];
const leftLines = [[0, 14], [0, 9], [0, 14], [0, 9], [0, 14]];
const midLines = [[0, 14], [2, 10], [0, 14], [2, 10], [0, 14]];
const rightLines = [[0, 14], [5, 9], [0, 14], [5, 9], [0, 14]];

function Lines({ rows, y = 2, pitch = 3 }) {
  return (
    <svg width="14" height="16" viewBox="0 0 14 16">
      {rows.map(([x, w], i) => (
        <rect key={i} x={x} y={y + i * pitch} width={w} height="1" fill="#5b7199" />
      ))}
    </svg>
  );
}

function Indent({ flip }) {
  return (
    <svg width="16" height="13" viewBox="0 0 16 13" stroke="#5b7199" fill="none">
      <path d="M1 .5h4M7 .5h9M7 2.500h9M7 5.500h6M7 7.500h9M1 10.500h4M7 10.500h9M1 12.500h14" />
      <path d={flip ? 'M0 6.500h5M3 4l2.500 2.500L3 9' : 'M1 6.500h5M3.500 4L1 6.500 3.500 9'} stroke="#8da3c8" strokeWidth="1.500" />
    </svg>
  );
}

function LauncherIcon() {
  return (
    <svg width="9" height="9" viewBox="0 0 9 9" fill="none">
      <path d="M.5 6V.500H6" stroke="#5a82b8" />
      <path d="M3 3h6v6H3z" fill="#fff" />
      <path d="M4 4l4 4M8.500 5v3.500H5" stroke="#3c6090" />
    </svg>
  );
}

function RibbonGroup({ title, width, pad, launcher, children }) {
  return (
    <Group $width={width}>
      <GroupBody $pad={pad}>{children}</GroupBody>
      <GroupLabel>
        <span>{title}</span>
        {launcher && (
          <Launcher disabled={launcher === 'off'} aria-label={`${title} 옵션`}>
            <LauncherIcon />
          </Launcher>
        )}
      </GroupLabel>
    </Group>
  );
}

function Big({ icon, lines, min }) {
  const last = lines.length - 1;
  return (
    <BigButton disabled $min={min}>
      {icons[icon]}
      {lines.map((line, i) => (
        <BigLine key={line}>
          {line}
          {i === last && <Caret />}
        </BigLine>
      ))}
    </BigButton>
  );
}

function Small({ icon, text, arrow }) {
  return (
    <SmallButton disabled>
      <IconSlot>{icons[icon]}</IconSlot>
      {text}
      {arrow && <Caret />}
    </SmallButton>
  );
}

const Glyph = styled.span`
  font-size: ${(p) => p.$size || 12}px;
  font-weight: ${(p) => (p.$bold ? 'bold' : 'normal')};
  font-style: ${(p) => (p.$italic ? 'italic' : 'normal')};
  line-height: ${(p) => p.$lh || 14}px;
  border-bottom: ${(p) => (p.$bar ? `${p.$bar}px solid #7d92b6` : 0)};
`;
const Decimals = styled.span`
  display: flex;
  flex-direction: column;
  align-items: flex-end;
  font: bold 9px 'Liberation Sans', sans-serif;
  line-height: 9px;
`;

function ComboBox({ label, width }) {
  return (
    <Combo $width={width}>
      <select disabled aria-label={label} />
      <Caret />
    </Combo>
  );
}

function Orb() {
  return (
    <svg width="38" height="38" viewBox="0 0 38 38">
      <defs>
        <linearGradient id="orb" x1="0" y1="0" x2="0" y2="1">
          <stop offset="0" stopColor="#f6f9fd" />
          <stop offset="0.480" stopColor="#d5dfec" />
          <stop offset="0.520" stopColor="#b3c2d6" />
          <stop offset="1" stopColor="#fdfeff" />
        </linearGradient>
      </defs>
      <circle cx="19" cy="19" r="18" fill="url(#orb)" stroke="#6f87a8" />
      <circle cx="19" cy="19" r="16.500" fill="none" stroke="#fff" opacity="0.7" />
      <g fill="none">
        <path d="M17 14V9H9v9h4" stroke="#dd4814" strokeWidth="3.500" strokeLinejoin="round" />
        <path d="M21 17v-4h7v6h-4" stroke="#3e8fd8" strokeWidth="2.500" strokeLinejoin="round" />
        <path d="M13 22.500h-2V30h7v-4" stroke="#f7a61a" strokeWidth="3" strokeLinejoin="round" />
        <path d="M22 25v4.500h7V23h-4" stroke="#5aa532" strokeWidth="3" strokeLinejoin="round" />
      </g>
      <rect x="16" y="18" width="2" height="2" fill="#dd4814" />
      <rect x="20" y="18" width="2" height="2" fill="#3e8fd8" />
      <rect x="16" y="22" width="2" height="2" fill="#f39c12" />
      <rect x="20" y="22" width="2" height="2" fill="#5aa532" />
    </svg>
  );
}

const tabs = ['홈', '삽입', '페이지 레이아웃', '수식', '데이터', '검토', '보기', '개발 도구'];
const cellTools = [['insert', '삽입'], ['remove', '삭제'], ['format', '서식']];

function ExcelRibbon() {
  return (
    <Ribbon>
      <RibbonGroup title="클립보드" width={139} launcher="on">
        <BigButton disabled $min={54}>
          {icons.paste}
          <BigLine>붙여넣기</BigLine>
          <Caret />
        </BigButton>
        <Column>
          <Small icon="cut" text="잘라내기" />
          <Small icon="copy" text="복사" />
          <Small icon="brush" text="서식 복사" />
        </Column>
      </RibbonGroup>

      <RibbonGroup title="글꼴" width={234} launcher="off" pad="9px 3px 0">
        <ToolColumn>
          <ToolRow>
            <ComboBox label="글꼴" width={131} />
            <ComboBox label="글꼴 크기" width={47} />
            <ToolSet>
              <Tool disabled aria-label="글꼴 크기 크게">
                <Glyph $size={13}>가</Glyph>
                <SizeMark width="5" height="3" viewBox="0 0 5 3"><path d="M0 3h5L2.500 0z" fill={ink} /></SizeMark>
              </Tool>
              <Tool disabled aria-label="글꼴 크기 작게">
                <Glyph $size={10}>가</Glyph>
                <SizeMark width="5" height="3" viewBox="0 0 5 3"><path d="M0 0h5L2.500 3z" fill={ink} /></SizeMark>
              </Tool>
            </ToolSet>
          </ToolRow>
          <ToolRow>
            <ToolSet>
              <Tool disabled><Glyph $bold>가</Glyph></Tool>
              <Tool disabled><Glyph $italic>가</Glyph></Tool>
              <Tool disabled $width={34}><Glyph $bar={1}>가</Glyph><Caret /></Tool>
            </ToolSet>
            <ToolSet>
              <Tool disabled $width={33} aria-label="테두리">{icons.border}<Caret /></Tool>
            </ToolSet>
            <ToolSet>
              <Tool disabled $width={33} aria-label="채우기 색">{icons.fill}<Caret /></Tool>
              <Tool disabled $width={33}><Glyph $bar={3} $lh={13}>가</Glyph><Caret /></Tool>
            </ToolSet>
            <ToolSet>
              <Tool disabled $width={33}><Glyph $size={9} $lh={10}>내천<br />川</Glyph><Caret /></Tool>
            </ToolSet>
          </ToolRow>
        </ToolColumn>
      </RibbonGroup>

      <RibbonGroup title="맞춤" width={285} launcher="off" pad="9px 3px 0">
        <ToolColumn>
          <ToolRow>
            <ToolSet>
              <Tool disabled $width={23} aria-label="위쪽 맞춤"><Lines rows={threeLines} /></Tool>
              <Tool disabled $width={23} aria-label="가운데 맞춤"><Lines rows={threeLines} y={5} /></Tool>
              <Tool disabled $width={23} aria-label="아래쪽 맞춤"><Lines rows={threeLines} y={8} /></Tool>
            </ToolSet>
            <ToolSet>
              <Tool disabled $width={30} aria-label="방향">{icons.orient}<Caret /></Tool>
            </ToolSet>
          </ToolRow>
          <ToolRow>
            <ToolSet>
              <Tool disabled $width={23} aria-label="왼쪽"><Lines rows={leftLines} /></Tool>
              <Tool disabled $width={23} aria-label="가운데"><Lines rows={midLines} /></Tool>
              <Tool disabled $width={23} aria-label="오른쪽"><Lines rows={rightLines} /></Tool>
            </ToolSet>
            <ToolSet>
              <Tool disabled aria-label="내어쓰기"><Indent /></Tool>
              <Tool disabled aria-label="들여쓰기"><Indent flip /></Tool>
            </ToolSet>
          </ToolRow>
        </ToolColumn>
        <ToolDivider />
        <ToolColumn>
          <Small icon="wrap" text="텍스트 줄 바꿈" />
          <Small icon="merge" text="병합하고 가운데 맞춤" arrow />
        </ToolColumn>
      </RibbonGroup>

      <RibbonGroup title="표시 형식" width={136} launcher="off" pad="9px 3px 0">
        <ToolColumn>
          <ComboBox label="표시 형식" width={128} />
          <ToolRow>
            <ToolSet>
              <Tool disabled $width={33}><Glyph $bold $size={13}>₩</Glyph><Caret /></Tool>
              <Tool disabled $width={23}><Glyph $size={13}>%</Glyph></Tool>
              <Tool disabled aria-label="쉼표 스타일">
                <svg width="5" height="8" viewBox="0 0 5 8">
                  <path d="M0 0h4v4L1 8H0l1-4H0z" fill="#6b81a6" />
                </svg>
              </Tool>
            </ToolSet>
            <ToolSet>
              <Tool disabled>
                <Decimals><span>←.0</span><span>.00</span></Decimals>
              </Tool>
              <Tool disabled>
                <Decimals><span>.00</span><span>→.0</span></Decimals>
              </Tool>
            </ToolSet>
          </ToolRow>
        </ToolColumn>
      </RibbonGroup>

      <RibbonGroup title="스타일" width={142} pad="1px 2px 0">
        <Big icon="conditional" lines={['조건부', '서식']} />
        <Big icon="table" lines={['표', '서식']} />
        <Big icon="cellStyle" lines={['셀', '스타일']} min={50} />
      </RibbonGroup>

      <RibbonGroup title="셀" width={134} pad="1px 2px 0">
        {cellTools.map(([icon, text]) => (
          <BigButton disabled key={icon}>
            {icons[icon]}
            <BigLine>{text}</BigLine>
            <Caret />
          </BigButton>
        ))}
      </RibbonGroup>

      <RibbonGroup title="편집" width={186}>
        <Column $min={88}>
          <Small icon="sum" text="자동 합계" arrow />
          <Small icon="down" text="채우기" arrow />
          <Small icon="eraser" text="지우기" arrow />
        </Column>
        <Big icon="sort" lines={['정렬 및', '필터']} min={45} />
        <Big icon="find" lines={['찾기 및', '선택']} min={45} />
      </RibbonGroup>
    </Ribbon>
  );
}

function ExcelTitle() {
  return (
    <TitleBar>
      <TitleLeft>
        <QuickAccess>
          <IconButton aria-label="저장">
            <svg width="14" height="14" viewBox="0 0 14 14">
              <path d="M0 0h14v14H0z" fill="#8c9fc0" />
              <path d="M3 0h9v7H3z" fill="#e6edf7" />
              <path d="M4 9h7v5H4z" fill="#dbe3ef" />
              <path d="M8 10h2v4H8z" fill="#6d82a8" />
            </svg>
          </IconButton>
          <IconButton aria-label="다시 실행">
            <svg width="14" height="14" viewBox="0 0 14 14">
              <path d="M5 12C0 9 1 3 6 3c2 0 3 1 5 3" fill="none" stroke="#8c9fc0" strokeWidth="2.500" />
              <path d="M13 1v8H6z" fill="#8c9fc0" />
            </svg>
          </IconButton>
          <Caret color="#8c9fb8" />
          <QuickDivider />
          <IconButton aria-label="매크로">
            <svg width="17" height="15" viewBox="0 0 17 15">
              <path d="M2.500 5.500h13v9h-13z" fill="#fff" stroke="#4c6694" />
              <path d="M3 8.500h12M3 11.500h12M6.500 6v8M10.500 6v8" stroke="#9fb4d4" />
              <path d="M0 2l3-2 4 2v4L4 8 0 6z" fill="#f0b21c" />
              <circle cx="12" cy="3.500" r="3" fill="#d64cc8" />
            </svg>
          </IconButton>
        </QuickAccess>
        <MoreButton aria-label="빠른 실행 도구 모음 사용자 지정">
          <svg width="6" height="7" viewBox="0 0 6 7" fill="#15428b">
            <path d="M0 0h6v1H0zM0 3h6L3 6z" />
          </svg>
        </MoreButton>
      </TitleLeft>
      <Title>Microsoft Excel</Title>
      <TitleRight>
        <WindowButtons>
          <WindowButton $width={28} aria-label="최소화">
            <svg width="12" height="12" viewBox="0 0 12 12">
              <path d="M.5 6.500h11v4H.500z" fill="#fff" stroke="#4a5668" />
            </svg>
          </WindowButton>
          <WindowButton $width={27} aria-label="최대화">
            <svg width="12" height="11" viewBox="0 0 12 11">
              <path d="M.5.500h11v9.500H.500z" fill="#fff" stroke="#4a5668" />
              <path d="M3.500 3.500h5v3h-5z" fill="#b5c8dc" stroke="#4a5668" />
            </svg>
          </WindowButton>
          <WindowButton $width={47} $close aria-label="닫기">
            <svg width="12" height="11" viewBox="0 0 12 11">
              <path d="M2 2l8 7M10 2L2 9" stroke="#5b3a3a" strokeWidth="4.500" />
              <path d="M2 2l8 7M10 2L2 9" stroke="#fff" strokeWidth="2.500" />
            </svg>
          </WindowButton>
        </WindowButtons>
      </TitleRight>
    </TitleBar>
  );
}

function ZoomIcon({ plus }) {
  return (
    <svg width="17" height="17" viewBox="0 0 17 17">
      <circle cx="8.500" cy="8.500" r="7.500" fill="#dce8f6" stroke="#44628f" />
      <circle cx="8.500" cy="8.500" r="6" fill="none" stroke="#fff" />
      <path d={plus ? 'M4.500 8.500h8M8.500 4.500v8' : 'M4.500 8.500h8'} stroke="#364a68" strokeWidth="2" />
    </svg>
  );
}

function ExcelStatus() {
  return (
    <StatusBar>
      <StatusCell $left={7}>준비</StatusCell>
      <StatusCell $left={8}>
        <IconButton aria-label="매크로 기록">
          <svg width="15" height="13" viewBox="0 0 15 13">
            <path d="M.5.500h14v12H.500z" fill="#fff" stroke="#4c6694" />
            <path d="M1 1h13v2H1z" fill="#4d7fdc" />
            <path d="M2 6.500h11M2 9.500h11" stroke="#8ea3c6" strokeDasharray="3 1" />
            <circle cx="3" cy="3" r="3" fill="#dd4a26" />
          </svg>
        </IconButton>
      </StatusCell>
      <StatusRight>
        <ViewButtons>
          <ViewButton aria-label="기본">
            <svg width="13" height="11" viewBox="0 0 13 11" fill="#fff" stroke="#555">
              <path d="M.5.500h12v10H.500zM0 3.500h13M0 7h13M4.500 0v11M8.500 0v11" />
            </svg>
          </ViewButton>
          <ViewButton aria-label="페이지 레이아웃">
            <svg width="13" height="11" viewBox="0 0 13 11" stroke="#555">
              <path d="M.5.500h12v10H.500z" fill="#999" />
              <path d="M3.500 1.500h6v8h-6z" fill="#fff" />
              <path d="M5 4h3M5 6h3" />
            </svg>
          </ViewButton>
          <ViewButton aria-label="페이지 나누기 미리 보기">
            <svg width="13" height="11" viewBox="0 0 13 11" stroke="#555">
              <path d="M.5.500h12v10H.500z" fill="#aaa" />
              <path d="M.5.500h3v6h-3zM3.500.500h4v6h-4z" fill="#fff" />
            </svg>
          </ViewButton>
        </ViewButtons>
        <ZoomLabel>10%</ZoomLabel>
        <ZoomButton aria-label="축소"><ZoomIcon /></ZoomButton>
        <ZoomSlider type="range" min="0" max="100" defaultValue="50" aria-label="확대/축소" />
        <ZoomButton aria-label="확대"><ZoomIcon plus /></ZoomButton>
        <Grip width="11" height="11" viewBox="0 0 11 11" fill="#3c5f96">
          <path d="M8 0h2v2H8zM4 4h2v2H4zM8 4h2v2H8zM0 8h2v2H0zM4 8h2v2H4zM8 8h2v2H8z" />
        </Grip>
      </StatusRight>
    </StatusBar>
  );
}

function Excel() {
  return (
    <ExcelWindow>
      <ExcelTitle />
      <Client>
        <TabBar>
          {tabs.map((tab, i) => (
            <Tab key={tab} $active={i === 0}>
              {tab}
            </Tab>
          ))}
          <TabHelp aria-label="도움말">
            <HelpIcon size={14} />
          </TabHelp>
        </TabBar>
        <ExcelRibbon />
        <FormulaBar>
          <NameBox aria-label="이름 상자" />
          <NameArrow aria-label="이름 목록">
            <Caret color="#000" w={8} h={4} />
          </NameArrow>
          <FxPill>
            <FxDot />
            <FxButton aria-label="함수 삽입">f<small>x</small></FxButton>
          </FxPill>
          <FormulaInput aria-label="수식 입력줄" />
          <ExpandButton aria-label="수식 입력줄 확장">
            <svg width="8" height="9" viewBox="0 0 8 9" fill="none" stroke="#000" strokeWidth="1.500">
              <path d="M1 1l3 3 3-3M1 5l3 3 3-3" />
            </svg>
          </ExpandButton>
        </FormulaBar>
        <Workspace />
        <ExcelStatus />
      </Client>
      <OrbButton aria-label="Office 단추">
        <Orb />
      </OrbButton>
    </ExcelWindow>
  );
}

const words = [46, 18, 58, 24, 50, 34, 60, 20, 44, 70, 26, 48, 30];

function App() {
  return (
    <>
      <GlobalStyle />
      <Desktop>
        <Background />
        <SheetWindow />
        <BrowserWindow />
        <ExplorerWindow />
        <BackWindow>
          <BackPage>
            {words.map((width, i) => (
              <BackWord key={i} $width={width} />
            ))}
          </BackPage>
        </BackWindow>
        <Excel />
      </Desktop>
    </>
  );
}

export default App;
